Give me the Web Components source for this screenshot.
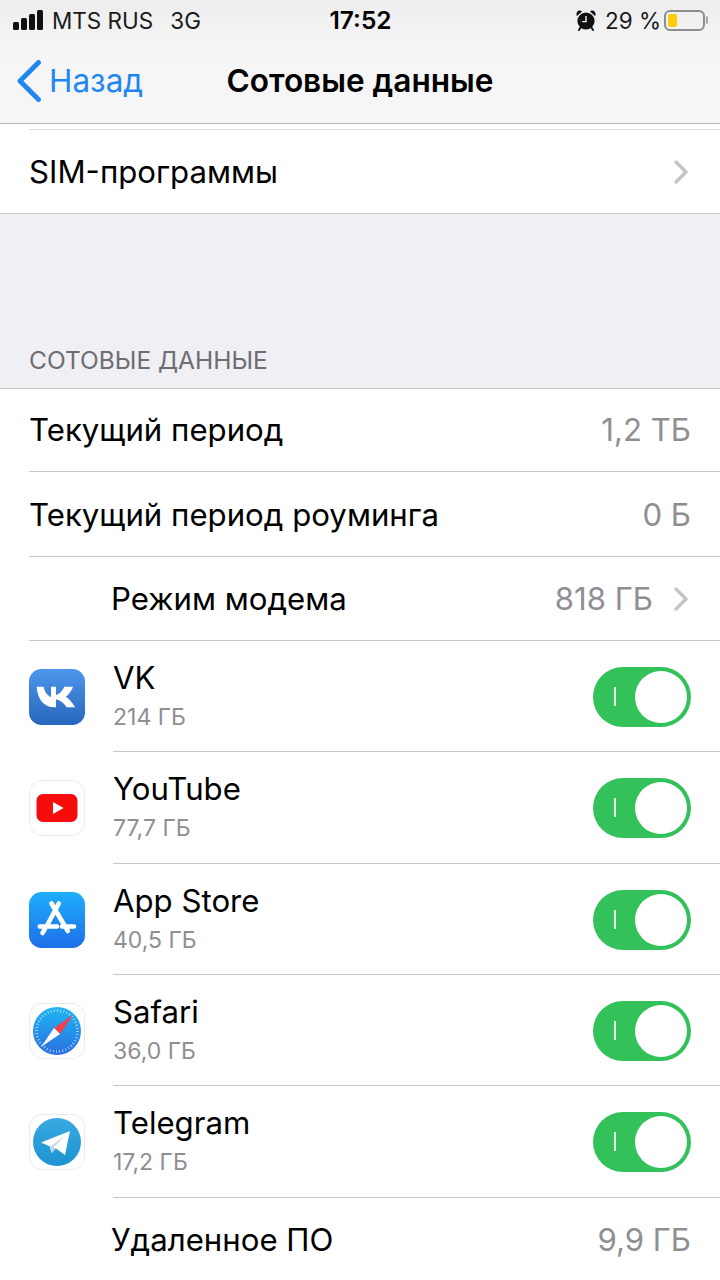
<!DOCTYPE html>
<html lang="ru">
<head>
<meta charset="utf-8">
<title>Сотовые данные</title>
<style>
  html, body { margin: 0; padding: 0; background: #fff; }
  body { width: 720px; height: 1280px; overflow: hidden; font-family: Inter, "Liberation Sans", sans-serif; color: #000; }
</style>
</head>
<body>

<template id="status-bar-template">
  <style>
    :host { display: flex; align-items: center; height: 40px; padding: 0 12px 0 13px; font-size: 22.5px; color: #1a1a1a; }
    .signal { display: flex; align-items: flex-end; gap: 2px; height: 20px; margin-right: 9px; }
    .signal i { display: block; width: 6px; background: #111; border-radius: 1.5px; }
    .carrier { display: flex; gap: 17px; flex: 1 1 0; white-space: nowrap; }
    .time { font-size: 24.5px; font-weight: 600; color: #000; }
    .right { display: flex; align-items: center; justify-content: flex-end; flex: 1 1 0; white-space: nowrap; }
    .pct { margin: 0 3px 0 9px; }
    .battery { position: relative; width: 37px; height: 17px; border: 2px solid #8c8c8c; border-radius: 6px; }
    .battery b { position: absolute; left: 1.5px; top: 2px; bottom: 2px; width: 9.5px; background: #fecb0a; border-radius: 2px; }
    .cap { width: 2px; height: 8px; margin-left: 1px; background: #a5a5a5; border-radius: 0 2px 2px 0; }
  </style>
  <div class="carrier">
    <div style="display:flex;align-items:center">
      <div class="signal"><i style="height:8px"></i><i style="height:12px"></i><i style="height:16px"></i><i style="height:20px"></i></div>
      <span>MTS RUS</span>
    </div>
    <span>3G</span>
  </div>
  <span class="time">17:52</span>
  <div class="right">
    <svg width="20" height="21" viewBox="0 0 20 21" aria-hidden="true">
      <path d="M1 6 L6 1.4 A3.2 3.2 0 0 0 .8 2.6 A3.4 3.4 0 0 0 1 6Z M19 6 L14 1.4 A3.2 3.2 0 0 1 19.2 2.6 A3.4 3.4 0 0 1 19 6Z" fill="#111"/>
      <circle cx="10" cy="11" r="8.6" fill="#111"/>
      <path d="M4.5 17.5 L3 20 M15.5 17.5 L17 20" stroke="#111" stroke-width="2" stroke-linecap="round"/>
      <path d="M10 6 V11.6 H6.2" fill="none" stroke="#f2f2f2" stroke-width="1.4"/>
    </svg>
    <span class="pct">29 %</span>
    <div class="battery"><b></b></div>
    <div class="cap"></div>
  </div>
</template>

<template id="nav-bar-template">
  <style>
    :host { display: block; height: 123px; border-bottom: 1px solid #b5b5b5; background: linear-gradient(#ededed 0, #f5f5f5 45px, #f6f6f6 100%); }
    .bar { position: relative; display: flex; align-items: center; justify-content: center; height: 83px; }
    .back { position: absolute; left: 17px; top: 0; bottom: 2px; display: flex; align-items: center; gap: 8px; color: #1f87f0; font-size: 31.5px; }
    .title { font-size: 31.6px; font-weight: 600; margin-top: -2px; }
  </style>
  <slot name="status"></slot>
  <div class="bar">
    <div class="back">
      <svg width="24" height="42" viewBox="0 0 24 42" aria-hidden="true"><path d="M21.5 2.5 L3 21 L21.5 39.5" fill="none" stroke="#1f87f0" stroke-width="4.8" stroke-linecap="round" stroke-linejoin="round"/></svg>
      <span>Назад</span>
    </div>
    <span class="title"><slot></slot></span>
  </div>
</template>

<template id="settings-row-template">
  <style>
    :host { display: flex; align-items: center; box-sizing: border-box; height: var(--row-height, 84px); background: #fff; font-size: 31.2px; position: relative; }
    :host::after { content: ""; position: absolute; left: var(--line-left, 29px); right: 0; bottom: 0; height: 1px; background: #c8c8c8; }
    :host([last])::after { display: none; }
    .label { flex: 1; white-space: nowrap; padding-left: var(--text-left, 29px); }
    .value { color: #8e8e93; white-space: nowrap; padding-right: 29px; }
    .chev { margin-right: 31px; margin-left: -9px; }
    :host([plain]) .chev { display: none; }
  </style>
  <span class="label"><slot></slot></span>
  <span class="value"><slot name="value"></slot></span>
  <svg class="chev" width="16" height="26" viewBox="0 0 16 26" aria-hidden="true"><path d="M3 3 L13 13 L3 23" fill="none" stroke="#c4c4c7" stroke-width="3.4" stroke-linecap="round" stroke-linejoin="round"/></svg>
</template>

<template id="app-row-template">
  <style>
    :host { display: flex; align-items: center; box-sizing: border-box; height: var(--row-height, 111px); background: #fff; position: relative; }
    :host::after { content: ""; position: absolute; left: 113px; right: 0; bottom: 0; height: 1px; background: #c8c8c8; }
    .icon { display: flex; width: 56px; height: 56px; margin: 0 28px 0 29px; flex: none; }
    .text { flex: 1; display: flex; flex-direction: column; gap: 8px; white-space: nowrap; margin-top: -4px; }
    .name { font-size: 31.2px; line-height: 36px; }
    .size { font-size: 23px; line-height: 26px; color: #8e8e93; }
    .switch { position: relative; width: 98px; height: 60px; margin-right: 29px; border-radius: 30px; background: #33c25a; flex: none; }
    .switch::before { content: ""; position: absolute; left: 21px; top: 20px; width: 2px; height: 19px; background: #e4f7ea; }
    .switch::after { content: ""; position: absolute; right: 4px; top: 4px; width: 52px; height: 52px; border-radius: 50%; background: #fff; }
  </style>
  <div class="icon"><slot name="icon"></slot></div>
  <div class="text">
    <span class="name"><slot></slot></span>
    <span class="size"><slot name="size"></slot></span>
  </div>
  <div class="switch"></div>
</template>

<cellular-screen>
  <nav-bar>
    <status-bar slot="status"></status-bar>
    Сотовые данные
  </nav-bar>
</cellular-screen>

<script>
  // small helper so each element only has to name its template
  function templated(id) {
    return class extends HTMLElement {
      constructor() {
        super();
        const root = this.attachShadow({mode: 'open'});
        root.appendChild(document.getElementById(id).content.cloneNode(true));
      }
    };
  }

  customElements.define('status-bar', templated('status-bar-template'));
  customElements.define('nav-bar', templated('nav-bar-template'));
  customElements.define('settings-row', templated('settings-row-template'));
  customElements.define('app-row', templated('app-row-template'));

  const ICONS = {
    vk: `<svg slot="icon" width="56" height="56" viewBox="0 0 56 56">
      <defs><linearGradient id="vkg" x1="0" y1="0" x2="0" y2="1"><stop offset="0" stop-color="#4d96ec"/><stop offset="1" stop-color="#2767bd"/></linearGradient></defs>
      <rect width="56" height="56" rx="12.5" fill="url(#vkg)"/>
      <path d="M7.7 17.7 H14.6 C15.4 22 18.4 27 22 28 V17.7 H27 V26 C30 25.4 33.6 21.6 35.3 17.7 H44 C42.8 22 39.4 25.6 36.8 27.7 C39.8 29.6 43.8 33.4 46 38.3 H37.6 C35.6 34.6 31.6 31 27 30.4 V38.3 H25 C15 38.3 8.4 30 7.7 17.7Z" fill="#fff"/>
    </svg>`,
    youtube: `<svg slot="icon" width="56" height="56" viewBox="0 0 56 56">
      <rect x=".5" y=".5" width="55" height="55" rx="12.5" fill="#fff" stroke="#ececec"/>
      <rect x="7.5" y="14" width="41" height="28" rx="6.5" fill="#f60c0c"/>
      <path d="M24 22 L34.5 28 L24 34Z" fill="#fff"/>
    </svg>`,
    appstore: `<svg slot="icon" width="56" height="56" viewBox="0 0 56 56">
      <defs><linearGradient id="asg" x1="0" y1="0" x2="0" y2="1"><stop offset="0" stop-color="#1eaefc"/><stop offset="1" stop-color="#1d6fe8"/></linearGradient></defs>
      <rect width="56" height="56" rx="12.5" fill="url(#asg)"/>
      <path d="M29.8 11.5 L17.5 34.5 M22.5 11.5 L38.8 39 M10.8 34.5 H28 M33 34.5 H45 M13.5 41 L16 36.8" fill="none" stroke="#fff" stroke-width="4.6" stroke-linecap="round"/>
    </svg>`,
    safari: `<svg slot="icon" width="56" height="56" viewBox="0 0 56 56">
      <defs><linearGradient id="sfg" x1="0" y1="0" x2="0" y2="1"><stop offset="0" stop-color="#1fb6f4"/><stop offset="1" stop-color="#2a6fe0"/></linearGradient></defs>
      <rect x=".5" y=".5" width="55" height="55" rx="12.5" fill="#fff" stroke="#ececec"/>
      <circle cx="28" cy="28" r="24" fill="url(#sfg)"/>
      <circle cx="28" cy="28" r="20.5" fill="none" stroke="#cfe8fb" stroke-width="2.6" stroke-dasharray="1 2.2" opacity=".75"/>
      <path d="M44 12 L25 25 L31 31Z" fill="#f2404a"/>
      <path d="M12 44 L25 25 L31 31Z" fill="#fff"/>
    </svg>`,
    telegram: `<svg slot="icon" width="56" height="56" viewBox="0 0 56 56">
      <defs><linearGradient id="tgg" x1="0" y1="0" x2="0" y2="1"><stop offset="0" stop-color="#38a9e0"/><stop offset="1" stop-color="#1e93d2"/></linearGradient></defs>
      <rect x=".5" y=".5" width="55" height="55" rx="12.5" fill="#fff" stroke="#ececec"/>
      <circle cx="28" cy="28" r="24" fill="url(#tgg)"/>
      <path d="M12 28.5 L41 17 L36 41 L27 34.5 L22.5 39 L21 32.5Z" fill="#fff"/>
      <path d="M21 32.5 L22.5 39 L24 34 L36 22Z" fill="#c8daea"/>
      <path d="M22.5 39 L24 33.5 L27 34.5Z" fill="#a9c9dd"/>
    </svg>`
  };

  const APPS = [
    ['VK', '214 ГБ', 'vk', 111],
    ['YouTube', '77,7 ГБ', 'youtube', 112],
    ['App Store', '40,5 ГБ', 'appstore', 111],
    ['Safari', '36,0 ГБ', 'safari', 111],
    ['Telegram', '17,2 ГБ', 'telegram', 112]
  ];

  class CellularScreen extends HTMLElement {
    constructor() {
      super();
      const root = this.attachShadow({mode: 'open'});
      root.innerHTML = `
        <style>
          :host { display: block; }
          .gap { height: 5px; background: #fff; }
          .spacer { box-sizing: border-box; height: 176px; background: #efeff4; border-top: 1px solid #c8c8c8; border-bottom: 1px solid #c8c8c8; display: flex; align-items: flex-end; }
          .caption { padding: 0 0 14px 29px; font-size: 24.5px; line-height: 28px; color: #6d6d72; }
          .top-line { height: 1px; background: #dcdcdc; margin-left: 29px; }
        </style>
        <slot></slot>
        <div class="gap"></div>
        <div class="top-line"></div>
        <settings-row style="--row-height:83px;--line-left:720px">SIM-программы</settings-row>
        <div class="spacer"><span class="caption">СОТОВЫЕ ДАННЫЕ</span></div>
        <settings-row plain style="--row-height:83px;padding-bottom:2px">Текущий период<span slot="value">1,2 ТБ</span></settings-row>
        <settings-row plain style="--row-height:85px">Текущий период роуминга<span slot="value">0 Б</span></settings-row>
        <settings-row style="--text-left:111px">Режим модема<span slot="value">818 ГБ</span></settings-row>
        <div id="apps"></div>
        <settings-row plain last style="--text-left:111px">Удаленное ПО<span slot="value">9,9 ГБ</span></settings-row>
      `;
      root.getElementById('apps').innerHTML = APPS.map(([name, size, icon, height]) =>
        `<app-row style="--row-height:${height}px">${ICONS[icon]}${name}<span slot="size">${size}</span></app-row>`).join('');
    }
  }
  customElements.define('cellular-screen', CellularScreen);
</script>
</body>
</html>
